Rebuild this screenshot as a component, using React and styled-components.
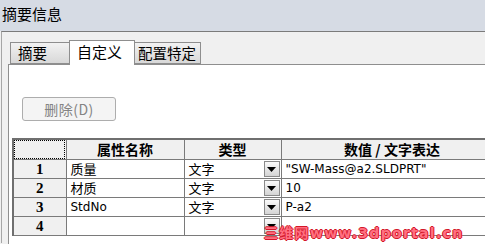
import React from "react";
import styled, { createGlobalStyle } from "styled-components";

const GlobalStyle = createGlobalStyle`
  html, body {
    margin: 0;
    padding: 0;
    background: #f0f0f0;
  }
  body {
    font-family: "Noto Sans CJK SC", "DejaVu Sans", sans-serif;
  }
`;

const Window = styled.div`
  position: relative;
  width: 485px;
  height: 244px;
  overflow: hidden;
  background: #f0f0f0;
`;

const TitleBar = styled.div`
  height: 31px;
  box-sizing: border-box;
  padding: 4px 0 0 2px;
  background: #d6dbe4;
  font-size: 15px;
  line-height: 20px;
  color: #000;
`;

const Frame = styled.div`
  border-top: 1px solid #7b7b7b;
  border-left: 1px solid #a6a6a6;
  margin-left: 1px;
  height: 212px;
  box-sizing: border-box;
  padding-top: 8px;
`;

const TabStrip = styled.div`
  display: flex;
  align-items: flex-end;
  height: 24px;
  padding-left: 8px;
`;

const Tab = styled.div`
  position: relative;
  z-index: ${(p) => (p.$active ? 2 : 1)};
  box-sizing: border-box;
  height: ${(p) => (p.$active ? "25px" : "22px")};
  margin-bottom: ${(p) => (p.$active ? "-1px" : "0")};
  width: ${(p) => p.$w}px;
  padding-left: ${(p) => p.$pad}px;
  border: 1px solid #8e8e8e;
  border-bottom: ${(p) => (p.$active ? "none" : "1px solid #8e8e8e")};
  margin-left: ${(p) => (p.$active ? "-1px" : "0")};
  margin-right: ${(p) => (p.$active ? "-1px" : "0")};
  background: ${(p) =>
    p.$active ? "#ffffff" : "linear-gradient(#f2f2f2, #e6e6e6 45%, #d8d8d8)"};
  font-size: ${(p) => (p.$active ? 15 : 14.5)}px;
  line-height: ${(p) => (p.$active ? "22px" : "20px")};
  color: #000;
  white-space: nowrap;
`;

const Panel = styled.div`
  margin-left: 6px;
  height: 190px;
  background: #ffffff;
  border-top: 1px solid #8e8e8e;
  border-left: 1px solid #8e8e8e;
  box-sizing: border-box;
  padding: 32px 0 0 3px;
`;

const DeleteButton = styled.button`
  display: block;
  margin-left: 10px;
  width: 94px;
  height: 24px;
  padding: 0;
  background: #f4f4f4;
  border: 1px solid #adadad;
  border-radius: 3px;
  color: #838383;
  font-family: "Noto Sans CJK SC", sans-serif;
  font-size: 14px;
  line-height: 20px;
  letter-spacing: 0.5px;
`;

const Grid = styled.table`
  margin-top: 17px;
  border-collapse: collapse;
  table-layout: fixed;
  width: 490px;
  border-top: 2px solid #6f6f6f;
  border-left: 2px solid #6f6f6f;
`;

const HeadCell = styled.th`
  padding: 0;
  background: #f0f0f0;
  border: 1px solid #7a7a7a;
  color: #000;
`;

const HeadText = styled.div`
  height: 19px;
  font-size: 14px;
  font-weight: bold;
  line-height: 19px;
  text-align: center;
`;

const CornerCell = styled(HeadCell)`
  outline: 1px dotted #000;
  outline-offset: -2px;
`;

const RowHead = styled.td`
  padding: 0;
  background: #f0f0f0;
  border: 1px solid #7a7a7a;
`;

const RowNum = styled.div`
  height: 18px;
  font-family: "Liberation Serif", "DejaVu Serif", serif;
  font-weight: bold;
  font-size: 15px;
  line-height: 18px;
  text-align: center;
`;

const Cell = styled.td`
  padding: 0 0 0 4px;
  border: 1px solid #7a7a7a;
  color: #000;
`;

const CellText = styled.div`
  height: 18px;
  font-family: ${(p) =>
    p.$latin
      ? `"DejaVu Sans", "Noto Sans CJK SC", sans-serif`
      : `"Noto Sans CJK SC", sans-serif`};
  font-size: ${(p) => (p.$latin ? 12 : 13)}px;
  line-height: 18px;
  white-space: nowrap;
`;

const TypeCell = styled(Cell)`
  padding: 0;
`;

const TypeInner = styled.div`
  display: flex;
  align-items: center;
  justify-content: space-between;
  height: 18px;
  padding-left: 4px;
`;

const DropButton = styled.span`
  display: flex;
  align-items: center;
  justify-content: center;
  width: 14px;
  height: 14px;
  margin-right: 1px;
  border: 1px solid #8a8a8a;
  background: linear-gradient(#fafafa, #d4d4d4);
`;

const Watermark = styled.div`
  position: absolute;
  left: 264px;
  top: 225px;
  font-family: "DejaVu Sans", "Noto Sans CJK SC", sans-serif;
  font-weight: bold;
  font-size: 14px;
  line-height: 16px;
  letter-spacing: 1.3px;
  color: #ff7080;
  text-shadow: 1px 0 #d3172a, -1px 0 #d3172a, 0 1px #d3172a, 0 -1px #d3172a;
  white-space: nowrap;
`;

const Arrow = () => (
  <svg width="9" height="5" viewBox="0 0 9 5">
    <path d="M0 0H9L4.5 5Z" fill="#000" />
  </svg>
);

const rows = [
  { n: 1, name: "质量", type: "文字", value: '"SW-Mass@a2.SLDPRT"' },
  { n: 2, name: "材质", type: "文字", value: "10" },
  { n: 3, name: "StdNo", type: "文字", value: "P-a2", latinName: true },
  { n: 4, name: "", type: "", value: "" },
];

export default function App() {
  return (
    <>
      <GlobalStyle />
      <Window>
        <TitleBar>摘要信息</TitleBar>
        <Frame>
          <TabStrip>
            <Tab $w={60} $pad={7}>摘要</Tab>
            <Tab $active $w={66} $pad={7}>自定义</Tab>
            <Tab $w={67} $pad={3}>配置特定</Tab>
          </TabStrip>
          <Panel>
            <DeleteButton disabled>删除(D)</DeleteButton>
            <Grid>
              <colgroup>
                <col style={{ width: 53 }} />
                <col style={{ width: 118 }} />
                <col style={{ width: 97 }} />
                <col style={{ width: 222 }} />
              </colgroup>
              <thead>
                <tr>
                  <CornerCell>
                    <HeadText />
                  </CornerCell>
                  <HeadCell>
                    <HeadText>属性名称</HeadText>
                  </HeadCell>
                  <HeadCell>
                    <HeadText>类型</HeadText>
                  </HeadCell>
                  <HeadCell>
                    <HeadText>数值 / 文字表达</HeadText>
                  </HeadCell>
                </tr>
              </thead>
              <tbody>
                {rows.map((r) => (
                  <tr key={r.n}>
                    <RowHead>
                      <RowNum>{r.n}</RowNum>
                    </RowHead>
                    <Cell>
                      <CellText $latin={r.latinName}>{r.name}</CellText>
                    </Cell>
                    <TypeCell>
                      <TypeInner>
                        <CellText>{r.type}</CellText>
                        <DropButton>
                          <Arrow />
                        </DropButton>
                      </TypeInner>
                    </TypeCell>
                    <Cell>
                      <CellText $latin>{r.value}</CellText>
                    </Cell>
                  </tr>
                ))}
              </tbody>
            </Grid>
          </Panel>
        </Frame>
        <Watermark>三维网www.3dportal.cn</Watermark>
      </Window>
    </>
  );
}
